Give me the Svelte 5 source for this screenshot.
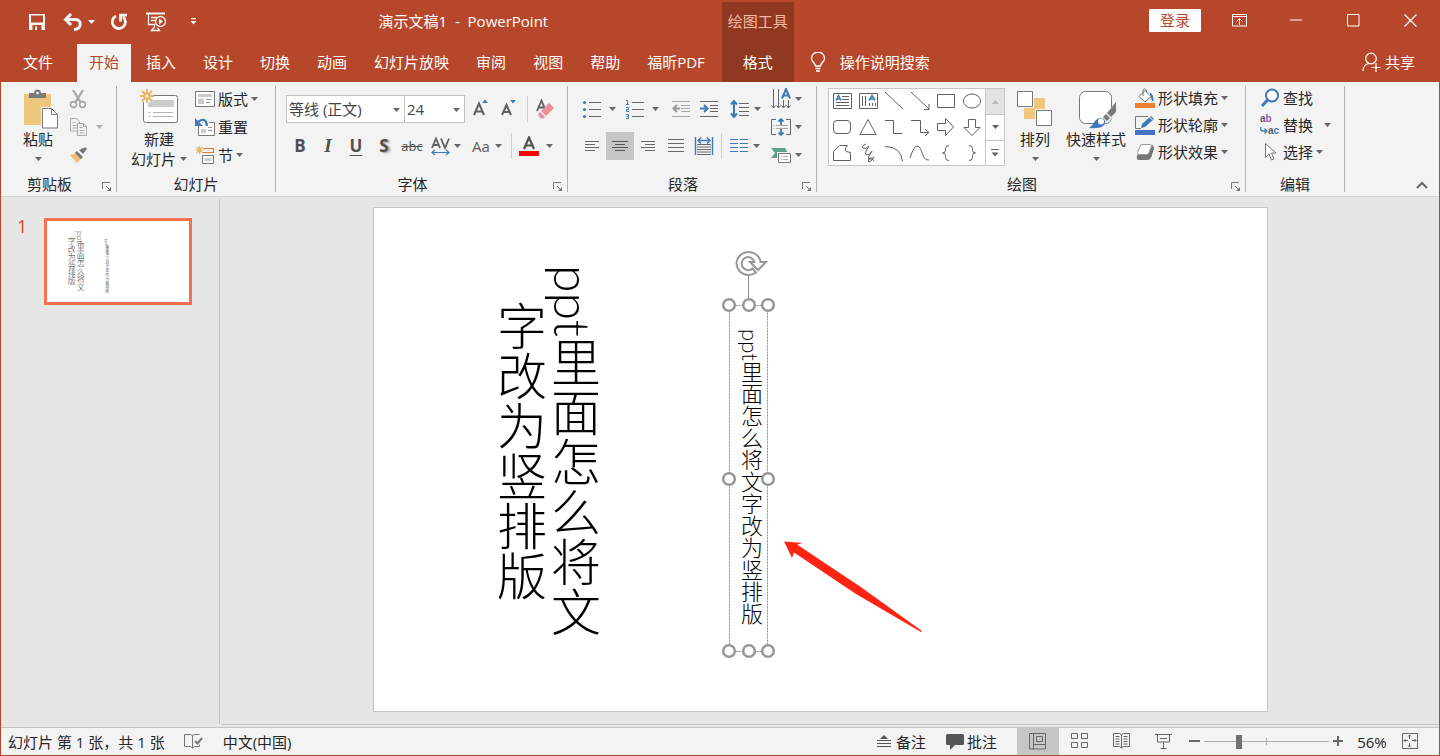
<script>
  let fontName = $state('等线 (正文)');
  let fontSize = $state('24');
  let zoom = $state(27);

  const tabs = ['插入', '设计', '切换', '动画', '幻灯片放映', '审阅', '视图', '帮助', '福昕PDF'];

  // Shapes gallery, drawn on a 26x26 cell
  const shapes = [
    { name: '文本框', d: 'M4.5 5.5h18v15h-18zM13 8.5h7M13 11.5h7M7 14.5h13M7 17.5h13', letter: 'M7 12.500l2.500-5 2.500 5M8 11h3' },
    { name: '竖排文本框', d: 'M4.5 5.5h18v15h-18zM7.500 8v10M10.500 8v10M14.500 15v3M17.500 15v3M20.500 15v3', letter: 'M14 12.500l3-5 3 5M15.500 11h3' },
    { name: '直线', d: 'M4 4l18 17' },
    { name: '箭头', d: 'M4 4l18 17M22 16v5.500h-5' },
    { name: '矩形', d: 'M4.500 6.500h17v13h-17z' },
    { name: '椭圆', d: 'M4.500 13a8.500 7 0 0 1 17 0a8.500 7 0 0 1-17 0z' },
    { name: '圆角矩形', d: 'M8 6.500h10q3.500 0 3.500 3.500v6q0 3.500-3.500 3.500h-10q-3.500 0-3.500-3.500v-6q0-3.500 3.500-3.500z' },
    { name: '三角形', d: 'M13 5.500l8 15h-16z' },
    { name: '肘形连接符', d: 'M4 6.500h8.500v13h9' },
    { name: '肘形箭头', d: 'M4 6.500h9.500v12h8M18 15l4 3.500-4 3.500' },
    { name: '右箭头', d: 'M4.500 9.500h8v-5l8 8.500-8 8.500v-5h-8z' },
    { name: '下箭头', d: 'M9.500 5.500h7v8h4.500l-8 8-8-8h4.500z' },
    { name: '任意多边形', d: 'M4.500 20.500v-9l6-6h8q-6 6 3 7v8z' },
    { name: '自由曲线', d: 'M11 4q-5 2-3 4t6-2q-6 9-2 9t5-4q-5 7-3 8t5-2q-3 5-5 5t0-3 5 2' },
    { name: '弧形', d: 'M4 6.500q16 0 17.500 15' },
    { name: '曲线', d: 'M3 18q4-12 7-12c6 0 4 15 12 14' },
    { name: '左大括号', d: 'M16 5.500q-3.500 0-3.500 3v2q0 2.500-3 2.500q3 0 3 2.500v2q0 3 3.500 3' },
    { name: '右大括号', d: 'M10 5.500q3.500 0 3.500 3v2q0 2.500 3 2.500q-3 0-3 2.500v2q0 3-3.500 3' }
  ];

  // Centres of the resize handles around the selected text box
  const handles = [
    [355, 97], [375, 97], [394, 97],
    [355, 271], [394, 271],
    [355, 443], [375, 443], [394, 443]
  ];
</script>

{#snippet caret()}
  <svg class="caret" width="7" height="4" viewBox="0 0 7 4" aria-hidden="true"><path d="M0 0h7L3.500 4z" fill="currentColor" /></svg>
{/snippet}

{#snippet footer(label, launcher)}
  <div class="group-footer">
    <span>{label}</span>
    {#if launcher}
      <button class="launcher" aria-label="{label}设置">
        <svg width="10" height="10" viewBox="0 0 10 10" fill="none" stroke="#777"><path d="M.5 7V.5H8M4 4l4 4" /><path d="M9 5v4H5z" fill="#777" stroke="none" /></svg>
      </button>
    {/if}
  </div>
{/snippet}

<div class="window">
  <header>
    <div class="title-row">
      <div class="quick">
        <button aria-label="保存">
          <svg width="18" height="18" viewBox="0 0 18 18"><path d="M1 1h16v16H1zM3 2.500v7h12v-7zM4.500 12v5h9v-5z" fill="#f5f5f5" fill-rule="evenodd" /><path d="M7 13.500h2V17H7z" fill="#f5f5f5" /></svg>
        </button>
        <button class="undo" aria-label="撤消">
          <svg width="22" height="18" viewBox="0 0 22 18" fill="none" stroke="#f5f5f5" stroke-width="3"><path d="M4 6.500h9.500c6.500 0 6.500 9.500-1.500 10" /><path d="M9 1L3.500 6.500 9 12" /></svg>
          {@render caret()}
        </button>
        <button aria-label="重复">
          <svg width="18" height="18" viewBox="0 0 18 18" fill="none" stroke="#f5f5f5" stroke-width="2.800"><path d="M6 3A6.600 6.600 0 1 0 13 3.800" /><path d="M10.500 8.500V2.200H17" /></svg>
        </button>
        <button aria-label="从头开始">
          <svg width="22" height="20" viewBox="0 0 22 20" fill="none" stroke="#f5f5f5"><path d="M1 1.500h19" stroke-width="2" /><path d="M3.500 2v10.500h7M6 5.500h6M6 8.500h4M9.500 13v2l-3 3.500h8l-2-2.500" stroke-width="1.300" /><circle cx="15.500" cy="9.500" r="5" stroke-width="1.300" /><path d="M14 6.500v6l4-3z" fill="#f5f5f5" stroke="none" /></svg>
        </button>
        <button aria-label="自定义快速访问工具栏">
          <svg width="7" height="8" viewBox="0 0 7 8" fill="#f5f5f5"><path d="M1 0h5v1.200H1zM0.500 3h6L3.500 6.500z" /></svg>
        </button>
      </div>
      <h1>演示文稿1&nbsp; -&nbsp; PowerPoint</h1>
    </div>

    <nav class="tabs" aria-label="功能区">
      <button class="tab file">文件</button>
      <button class="tab active">开始</button>
      {#each tabs as tab}
        <button class="tab">{tab}</button>
      {/each}
    </nav>

    <div class="context">
      <span class="context-name">绘图工具</span>
      <button class="context-tab">格式</button>
    </div>

    <div class="window-controls">
      <button class="login">登录</button>
      <button class="control" aria-label="功能区显示选项">
        <svg width="15" height="13" viewBox="0 0 15 13" fill="none" stroke="#fff"><path d="M.5 .5h14v11.500H.5zM.5 2.500h14M7.500 11V5M4.500 7.500l3-3 3 3" /></svg>
      </button>
      <button class="control" aria-label="最小化">
        <svg width="13" height="13" viewBox="0 0 13 13"><path d="M0 6h12" stroke="#fff" /></svg>
      </button>
      <button class="control" aria-label="最大化">
        <svg width="13" height="13" viewBox="0 0 13 13"><path d="M.5 .5h11.500v11.500H.5z" fill="none" stroke="#fff" /></svg>
      </button>
      <button class="control" aria-label="关闭">
        <svg width="13" height="13" viewBox="0 0 13 13"><path d="M.5 .5l12 12M12.500 .5l-12 12" fill="none" stroke="#fff" stroke-width="1.200" /></svg>
      </button>
    </div>

    <div class="tell-row">
      <button class="tell">
        <svg width="16" height="20" viewBox="0 0 16 20" fill="none" stroke="#fff" stroke-width="1.300"><path d="M5.500 14c0-3-4-4-4-7.500a6.300 6.300 0 0 1 13 0c0 3.500-4 4.500-4 7.500zM5.500 16.500h5M6 19h4" /></svg>
        操作说明搜索
      </button>
      <button class="share">
        <svg width="19" height="20" viewBox="0 0 19 20" fill="none" stroke="#fff" stroke-width="1.200"><circle cx="9" cy="6.500" r="5.300" /><path d="M1 19c0-4 2.500-7 6-7.500M14 11v9M9.500 15.500h9" /></svg>
        共享
      </button>
    </div>
  </header>

  <section class="ribbon">
    <div class="group clipboard">
      <div class="group-body">
        <button class="big">
          <svg width="40" height="40" viewBox="0 0 40 40"><path d="M6 5h27v31H6z" fill="#edc77d" /><path d="M11 4h5a3.500 3.500 0 0 1 7 0h5v5H11z" fill="#7a7a7a" /><circle cx="19.500" cy="4" r="1.300" fill="#fff" /><path d="M24.500 19.500h9l6 6v13.500h-15z" fill="#fff" stroke="#f3f3f3" stroke-width="3" /><path d="M24.500 19.500h9l6 6v13.500h-15zM33.500 19.500v6h6" fill="#fff" stroke="#777" /></svg>
          <span>粘贴</span>
          <span>{@render caret()}</span>
        </button>
        <div class="stack loose">
          <button class="small faded" aria-label="剪切">
            <svg width="20" height="20" viewBox="0 0 20 20" fill="none" stroke="#a5a5a5" stroke-width="1.600"><path d="M5 1l7.500 12M15 1L7.500 13" stroke-width="2.200" /><circle cx="5.500" cy="15.500" r="2.900" /><circle cx="14.500" cy="15.500" r="2.900" /></svg>
          </button>
          <button class="small faded" aria-label="复制">
            <svg width="20" height="20" viewBox="0 0 20 20" fill="#f3f3f3" stroke="#aaa"><path d="M2.500 1.500h6l3 3v9.500h-9zM4.500 5.500h3M4.500 8.500h5M4.500 11h5" /><path d="M9.500 6.500h6l3 3v9h-9zM15.500 6.500v3h3M11.500 10.500h3M11.500 13.500h5M11.500 16h5" /></svg>
            <span class="copy-caret">{@render caret()}</span>
          </button>
          <button class="small" aria-label="格式刷">
            <svg width="20" height="20" viewBox="0 0 20 20"><path d="M2 10l7-2 5 5-5 5z" fill="#edc077" /><path d="M9 6l6 6-2 2-6-6zM11 5l4 4 3.500-4.500q1-2.500-2-2z" fill="#777" /></svg>
          </button>
        </div>
      </div>
      {@render footer('剪贴板', true)}
    </div>

    <div class="group slides">
      <div class="group-body">
        <button class="big wide">
          <svg width="42" height="40" viewBox="0 0 42 40"><rect x="5.500" y="6.500" width="34" height="27" rx="2" fill="#fff" stroke="#777" /><path d="M10 11h26v7H10z" fill="#ccc" /><path d="M15 23.500h20M15 27.500h20M10.500 23.500h2M10.500 27.500h2" stroke="#b5b5b5" /><circle cx="9" cy="7" r="7" fill="#f3f3f3" /><g stroke="#e8b55f" stroke-width="1.800" fill="none"><circle cx="9" cy="7" r="2.500" /><path d="M9 0v4M9 10v4M2 7h4M12 7h4M4 2l3 3M11 9l3 3M14 2l-3 3M7 9l-3 3" /></g></svg>
          <span>新建</span>
          <span>幻灯片{@render caret()}</span>
        </button>
        <div class="stack loose">
          <button class="small">
            <svg width="20" height="20" viewBox="0 0 20 20" fill="none" stroke="#777"><path d="M.5 2.500h19v15H.5z" fill="#fff" /><path d="M3 5h14v3H3zM3 9.500h6V15H3z" fill="#ccc" stroke="none" /><path d="M11 10.500h6M11 13.500h4" stroke="#999" /></svg>
            版式{@render caret()}
          </button>
          <button class="small">
            <svg width="20" height="20" viewBox="0 0 20 20" fill="none"><path d="M3.500 5.500h16v13h-16z" fill="#fff" stroke="#777" /><path d="M6 12h5v4H6z" fill="#ccc" /><path d="M13 10.500h4M13 13.500h4" stroke="#999" /><path d="M2 6q9-7 10 3" stroke="#f3f3f3" stroke-width="5" /><path d="M3 5q8-6 9 4" stroke="#3f7ab8" stroke-width="2.200" /><path d="M0 1v8h8z" fill="#3f7ab8" /></svg>
            重置
          </button>
          <button class="small">
            <svg width="20" height="20" viewBox="0 0 20 20" fill="none"><path d="M8 3.500h10.500v4H8" stroke="#e07a28" stroke-width="1.200" /><path d="M7.500 10.500h11v8h-11z" fill="#fff" stroke="#777" /><path d="M9.500 13h7v3h-7z" fill="#ccc" /><path d="M4.500 1v8M.5 5h8M1.500 2l6 6M7.500 2l-6 6" stroke="#e8b55f" stroke-width="1.200" /></svg>
            节{@render caret()}
          </button>
        </div>
      </div>
      {@render footer('幻灯片', false)}
    </div>

    <div class="group font">
      <div class="group-body rows">
        <div class="row">
          <div class="combos">
            <div class="combo name">
              <select bind:value={fontName} aria-label="字体">
                <option>等线 (正文)</option>
                <option>等线 Light (标题)</option>
              </select>
              {@render caret()}
            </div>
            <div class="combo size">
              <select bind:value={fontSize} aria-label="字号">
                <option>18</option>
                <option>24</option>
                <option>60</option>
              </select>
              {@render caret()}
            </div>
          </div>
          <div class="cluster">
            <button class="tool" aria-label="增大字号">
              <svg width="18" height="20" viewBox="0 0 18 20" fill="none"><path d="M1 16L6 4.500 11 16M3 12.500h6" stroke="#606060" stroke-width="2" /><path d="M9 4h6l-3-3.500z" fill="#3f7ab8" /></svg>
            </button>
            <button class="tool" aria-label="减小字号">
              <svg width="18" height="20" viewBox="0 0 18 20" fill="none"><path d="M1 16L5.500 6 10 16M2.500 13h6" stroke="#606060" stroke-width="2" /><path d="M9 1h6l-3 3.500z" fill="#3f7ab8" /></svg>
            </button>
          </div>
          <i class="sep"></i>
          <button class="tool" aria-label="清除所有格式">
            <svg width="20" height="20" viewBox="0 0 20 20" fill="none"><path d="M2 12L6.500 1.500 10 10M4 8.500h5" stroke="#606060" stroke-width="1.800" /><path d="M14 4l5 5-8 8-5-5z" fill="#e8909c" /><path d="M5 13l5 5-1.500 1.500H6L3.500 17v-2.500z" fill="#e8909c" /></svg>
          </button>
        </div>
        <div class="row">
          <div class="cluster">
            <button class="tool letter bold">B</button>
            <button class="tool letter italic">I</button>
            <button class="tool letter underline">U</button>
            <button class="tool letter shadow">S</button>
            <button class="tool letter strike">abc</button>
            <button class="tool drop tight" aria-label="字符间距">
              <svg width="28" height="20" viewBox="0 0 28 20" fill="none"><path d="M6 12L10 2.500 14 12M7.500 9h5M15 2.500L19 12l4-9.500" stroke="#606060" stroke-width="1.800" /><path d="M6 16.500h17M9 14L6 16.500 9 19M20 14l3 2.500-3 2.500" stroke="#3f7ab8" stroke-width="1.200" /></svg>
              {@render caret()}
            </button>
            <button class="tool drop tight"><span class="case">Aa</span>{@render caret()}</button>
          </div>
          <i class="sep"></i>
          <button class="tool drop" aria-label="字体颜色">
            <svg width="28" height="20" viewBox="0 0 28 20" fill="none"><path d="M9 13L14 1.500 19 13M11 9.500h6" stroke="#505050" stroke-width="2.200" /><path d="M4 15h20v5H4z" fill="#f00" /></svg>
            {@render caret()}
          </button>
        </div>
      </div>
      {@render footer('字体', true)}
    </div>

    <div class="group paragraph">
      <div class="group-body">
        <div class="rows">
          <div class="row">
            <div class="cluster">
              <button class="tool drop" aria-label="项目符号">
                <svg width="28" height="20" viewBox="0 0 28 20"><path d="M11 3.500h12M11 10.500h12M11 17.500h12" stroke="#666" /><g fill="#3f7ab8"><circle cx="6.500" cy="3.500" r="1.600" /><circle cx="6.500" cy="10.500" r="1.600" /><circle cx="6.500" cy="17.500" r="1.600" /></g></svg>
                {@render caret()}
              </button>
              <button class="tool drop" aria-label="编号">
                <svg width="28" height="20" viewBox="0 0 28 20" fill="none"><path d="M11 3.500h12M11 10.500h12M11 17.500h12" stroke="#666" /><path d="M5 1.500h1.500v4M5 5.500h3M5 8.500h2.500v2H5.500v2H8M5 15.500h2.500v4H5M5.500 17.500h2" stroke="#3f7ab8" /></svg>
                {@render caret()}
              </button>
            </div>
            <div class="cluster">
              <button class="tool" aria-label="减少缩进量">
                <svg width="20" height="18" viewBox="0 0 20 18" fill="none"><path d="M1 1.500h18M10 5.500h9M10 8.500h9M10 11.500h9M1 16.500h18" stroke="#aaa" /><path d="M9 8.500H3M6 5L2.500 8.500 6 12" stroke="#999" stroke-width="2" /></svg>
              </button>
              <button class="tool" aria-label="增加缩进量">
                <svg width="20" height="18" viewBox="0 0 20 18" fill="none"><path d="M1 1.500h18M11 5.500h8M11 8.500h8M11 11.500h8M1 16.500h18" stroke="#666" /><path d="M1 8.500h7M5 5l3.500 3.500L5 12" stroke="#3f7ab8" stroke-width="2" /></svg>
              </button>
            </div>
            <button class="tool drop tight" aria-label="行距">
              <svg width="28" height="20" viewBox="0 0 28 20" fill="none"><path d="M13 4.500h10M13 8.500h10M13 12.500h10M13 16.500h10" stroke="#666" /><path d="M8 2.500v15M5 5.500L8 2l3 3.500M5 14.500L8 18l3-3.500" stroke="#3f7ab8" stroke-width="2" /></svg>
              {@render caret()}
            </button>
          </div>
          <div class="row">
            <div class="cluster">
              <button class="tool" aria-label="左对齐"><svg width="16" height="12" viewBox="0 0 16 12"><path d="M1 1.500h14M1 4.500h10M1 7.500h14M1 10.500h10" stroke="#666" /></svg></button>
              <button class="tool pressed" aria-label="居中"><svg width="16" height="12" viewBox="0 0 16 12"><path d="M0 1.500h16M3 4.500h10M0 7.500h16M3 10.500h10" stroke="#555" /></svg></button>
              <button class="tool" aria-label="右对齐"><svg width="16" height="12" viewBox="0 0 16 12"><path d="M1 1.500h14M5 4.500h10M1 7.500h14M5 10.500h10" stroke="#666" /></svg></button>
              <button class="tool" aria-label="两端对齐"><svg width="16" height="14" viewBox="0 0 16 14"><path d="M0 .5h16M0 4.500h16M0 8.500h16M0 12.500h16" stroke="#666" /></svg></button>
              <button class="tool" aria-label="分散对齐">
                <svg width="20" height="20" viewBox="0 0 20 20" fill="none"><path d="M1.500 1v18M18.500 1v18M4 4.500h12M7 1.500L4 4.500l3 3M13 1.500l3 3-3 3" stroke="#3f7ab8" stroke-width="1.400" /><path d="M3 8.500h14M3 11h14M3 13.500h14M3 16h14M3 18.500h14" stroke="#666" /></svg>
              </button>
            </div>
            <i class="sep"></i>
            <button class="tool drop tight" aria-label="分栏">
              <svg width="28" height="20" viewBox="0 0 28 20"><path d="M5 3.500h8M5 7.500h8M5 11.500h8M5 15.500h8M15 3.500h8M15 7.500h8M15 11.500h8M15 15.500h8" stroke="#3f7ab8" /></svg>
              {@render caret()}
            </button>
          </div>
        </div>
        <div class="stack loose">
          <button class="small tight" aria-label="文字方向">
            <svg width="28" height="22" viewBox="0 0 28 22" fill="none"><path d="M6.500 1v19M11.500 1v19M16.500 12v8M21.500 12v8M4.500 17.500l2 2.500 2-2.500M9.500 17.500l2 2.500 2-2.500M14.500 17.500l2 2.500 2-2.500M19.500 17.500l2 2.500 2-2.500" stroke="#666" /><path d="M15 10.500l4-9.500 4 9.500M16.500 7.500h5" stroke="#3f7ab8" stroke-width="2" /></svg>
            {@render caret()}
          </button>
          <button class="small tight" aria-label="对齐文本">
            <svg width="28" height="20" viewBox="0 0 28 20" fill="none"><path d="M9 2.500H4.500v15H9M19 2.500h4.500v15H19" stroke="#666" /><path d="M9 8.500h12M9 11.500h12M6.500 8.500h1M6.500 11.500h1" stroke="#aaa" /><path d="M14 8V2M11.500 4.500L14 2l2.500 2.500M14 12v6M11.500 15.500L14 18l2.500-2.500" stroke="#3f7ab8" stroke-width="1.800" /></svg>
            {@render caret()}
          </button>
          <button class="small tight" aria-label="转换为 SmartArt">
            <svg width="28" height="20" viewBox="0 0 28 20" fill="none"><path d="M4 3h14l3 5-3 5H4l4-5z" fill="#5ba28c" /><path d="M11.500 8.500h12v9h-12z" fill="#fff" stroke="#f3f3f3" stroke-width="3" /><path d="M11.500 8.500h12v9h-12z" fill="#fff" stroke="#777" /><path d="M14 11.500h1M14 14.500h1M16 11.500h5M16 14.500h5" stroke="#aaa" /></svg>
            {@render caret()}
          </button>
        </div>
      </div>
      {@render footer('段落', true)}
    </div>

    <div class="group drawing">
      <div class="group-body">
        <div class="gallery">
          <div class="shapes">
            {#each shapes as shape}
              <button aria-label={shape.name}>
                <svg width="26" height="26" viewBox="0 0 26 26" fill="none" stroke="#606060">
                  <path d={shape.d} />
                  {#if shape.letter}
                    <path d={shape.letter} stroke="#3f7ab8" stroke-width="1.500" />
                  {/if}
                </svg>
              </button>
            {/each}
          </div>
          <div class="gallery-scroll">
            <button disabled aria-label="上一行"><svg width="7" height="4" viewBox="0 0 7 4"><path d="M0 4h7L3.500 0z" fill="#b5b5b5" /></svg></button>
            <button aria-label="下一行">{@render caret()}</button>
            <button aria-label="其他"><svg width="8" height="8" viewBox="0 0 8 8" fill="#666"><path d="M0 0h8v1H0zM.5 3.500h7L4 7.500z" /></svg></button>
          </div>
        </div>
        <button class="big">
          <svg width="40" height="40" viewBox="0 0 40 40"><path d="M19 9h11v11H19zM9 19h11v11H9z" fill="#edc77d" /><path d="M2.500 2.500h15v15h-15zM21.500 21.500h15v15h-15z" fill="#fff" stroke="#f3f3f3" stroke-width="3" /><path d="M2.500 2.500h15v15h-15zM21.500 21.500h15v15h-15z" fill="#fff" stroke="#777" /></svg>
          <span>排列</span>
          <span>{@render caret()}</span>
        </button>
        <button class="big wide">
          <svg width="40" height="40" viewBox="0 0 40 40"><rect x="3.500" y="2.500" width="32" height="32" rx="6" fill="#fff" stroke="#777" /><path d="M41 12v12L31 34l-5-4z" fill="#f3f3f3" /><path d="M40 13v10l-5 5-4-4zM30 25l4 4-3 3-4-4z" fill="#7a7a7a" /><path d="M13 39q4-3 6-7 4-5 9-2 3 4-1 7-4 3-14 2z" fill="#3f7ab8" /><circle cx="25" cy="32.500" r="3" fill="#fff" /></svg>
          <span>快速样式</span>
          <span>{@render caret()}</span>
        </button>
        <div class="stack">
          <button class="small">
            <svg width="20" height="20" viewBox="0 0 20 20" fill="none"><path d="M0 15h20v5H0z" fill="#ed7d31" /><path d="M10 2.500l6 6-6 5.500-6-5.500z" fill="#fff" stroke="#777" /><path d="M8 8V2q1.500-2.500 3.500 0v2" stroke="#777" /><path d="M14.500 4.500q4.500 1 4 9.500-2-1-2.500-5z" fill="#3f7ab8" /></svg>
            形状填充{@render caret()}
          </button>
          <button class="small">
            <svg width="20" height="20" viewBox="0 0 20 20" fill="none"><path d="M0 15h20v5H0z" fill="#4472c4" /><path d="M13 1.500H.5v12H6" stroke="#777" /><path d="M6 13l1-4 9-8 3 3-9 8z" fill="#3f7ab8" /><path d="M14.500 2l3 3" stroke="#fff" /></svg>
            形状轮廓{@render caret()}
          </button>
          <button class="small">
            <svg width="20" height="20" viewBox="0 0 20 20"><path d="M2 14l5-11h9q3 0 3 4l-3 9q-1 2-4 2H4q-3 0-2-4z" fill="#777" /><path d="M7 2.500h8q2 0 1.500 2l-2.500 6q-.5 2-2.500 2h-7q-2.500 0-2-2l2.500-6q.5-2 2-2z" fill="#fff" stroke="#999" /></svg>
            形状效果{@render caret()}
          </button>
        </div>
      </div>
      {@render footer('绘图', true)}
    </div>

    <div class="group editing">
      <div class="group-body">
        <div class="stack">
          <button class="small">
            <svg width="20" height="20" viewBox="0 0 20 20" fill="none" stroke="#3f7ab8"><circle cx="12" cy="7.500" r="6" fill="#fff" stroke-width="2" /><path d="M8 11.500l-6 6.500" stroke-width="3" /></svg>
            查找
          </button>
          <button class="small replace">
            <span class="swap" aria-hidden="true">
              <span>a<b>b</b></span>
              <span><svg width="8" height="8" viewBox="0 0 8 8" fill="none" stroke="#3f7ab8" stroke-width="1.300"><path d="M.8 0v2q0 2 2 2H7M4.500 1.500L7 4 4.500 6.500" /></svg>a<em>c</em></span>
            </span>
            替换{@render caret()}
          </button>
          <button class="small">
            <svg width="20" height="20" viewBox="0 0 20 20"><path d="M5.500 1.500v14l3.500-3.500 2.500 6 2.500-1-2.500-6h4.500z" fill="#fff" stroke="#777" /></svg>
            选择{@render caret()}
          </button>
        </div>
      </div>
      {@render footer('编辑', false)}
    </div>

    <button class="collapse" aria-label="折叠功能区">
      <svg width="12" height="8" viewBox="0 0 12 8"><path d="M1 7l5-5 5 5" fill="none" stroke="#666" stroke-width="2" /></svg>
    </button>
  </section>

  <main>
    <aside>
      <span class="slide-number">1</span>
      <button class="thumb" aria-label="幻灯片 1">
        <span class="thumb-title">ppt里面怎么将文<br />字改为竖排版</span>
        <span class="thumb-text">ppt里面怎么将文字改为竖排版</span>
      </button>
    </aside>

    <div class="stage">
      <div class="slide">
        <p class="slide-title">ppt里面怎么将文<br />字改为竖排版</p>
        <p class="slide-text">ppt里面怎么将文字改为竖排版</p>
        <svg class="overlay" viewBox="0 0 893 503" fill="none" aria-hidden="true">
          <path d="M355.500 97.500h38v346h-38z" stroke="#8c8c8c" stroke-dasharray="2 1" />
          <path d="M374.500 68v22" stroke="#8c8c8c" />
          <path d="M386.500 54A12 11.500 0 1 0 382 64.500L378.500 60.500A6.500 6.500 0 1 1 380.500 54H376L384 62 392 54Z" fill="#fff" stroke="#979797" stroke-width="2" />
          {#each handles as [x, y]}
            <circle cx={x} cy={y} r="5.800" fill="#fff" stroke="#979797" stroke-width="2.500" />
          {/each}
          <path d="M410 333.500l19 1.500-6 1.500 63 42 62 44.500-1 1-65-38-62-41.500-2 5.500z" fill="#ff2412" />
        </svg>
      </div>
    </div>
  </main>

  <footer class="status">
    <span>幻灯片 第 1 张，共 1 张</span>
    <button class="proof" aria-label="拼写检查">
      <svg width="19" height="17" viewBox="0 0 19 17" fill="none" stroke="#777"><path d="M8.500 2.500l-2-1H.5v12h6l2 1.500 2-1.500h5v-2M8.500 2.500V15M8.500 2.500l2-1h5" /><path d="M11 8l2.500 2.500L18 5" stroke-width="2" /></svg>
    </button>
    <button>中文(中国)</button>
    <div class="status-right">
      <button class="note">
        <svg width="14" height="15" viewBox="0 0 14 15"><path d="M3 5h8L7 1z" fill="#555" /><path d="M0 6.500h14M0 9.500h14M0 12.500h14" stroke="#555" /></svg>
        备注
      </button>
      <button class="comment">
        <svg width="18" height="17" viewBox="0 0 18 17"><path d="M1.500 1h15q1.500 0 1.500 1.500v8q0 1.500-1.500 1.500H9l-5 5v-5H1.500Q0 12 0 10.500v-8Q0 1 1.500 1z" fill="#555" /></svg>
        批注
      </button>
      <div class="views">
        <button class="pressed" aria-label="普通视图"><svg width="18" height="17" viewBox="0 0 18 17" fill="none" stroke="#666"><path d="M.5 .5h16v15.500H.5zM4.500 .5v15.500M4.500 11.500h12M7.500 3.500h6v5h-6z" /></svg></button>
        <button aria-label="幻灯片浏览"><svg width="18" height="17" viewBox="0 0 18 17" fill="none" stroke="#666"><path d="M.5 .5h6v5h-6zM10.500 .5h6v5h-6zM.5 9.500h6v5h-6zM10.500 9.500h6v5h-6z" /></svg></button>
        <button aria-label="阅读视图"><svg width="18" height="17" viewBox="0 0 18 17" fill="none" stroke="#666"><path d="M8.500 2L6.500 .5h-6v13h6l2 1.500 2-1.500h6V.5h-6zM8.500 2v13M2.500 3.500h4M2.500 6h4M2.500 8.500h4M2.500 11h4M10.500 3.500h4M10.500 6h4M10.500 8.500h4M10.500 11h4" /></svg></button>
        <button aria-label="幻灯片放映"><svg width="18" height="17" viewBox="0 0 18 17" fill="none" stroke="#666"><path d="M0 1.500h17M2.500 1.500v7.500h12V1.500M5 5.500h7M8.500 9v6M5.500 15.500h6" /></svg></button>
      </div>
      <button class="step" aria-label="缩小"><svg width="11" height="11" viewBox="0 0 11 11"><path d="M0 5h11" stroke="#666" stroke-width="2" /></svg></button>
      <input type="range" min="0" max="100" bind:value={zoom} aria-label="缩放" />
      <button class="step" aria-label="放大"><svg width="11" height="11" viewBox="0 0 11 11"><path d="M0 5h10M5 0v10" stroke="#666" stroke-width="2" /></svg></button>
      <button class="percent">56%</button>
      <button class="fit" aria-label="适应窗口"><svg width="16" height="17" viewBox="0 0 16 17" fill="none" stroke="#666"><path d="M.5 .5h15v15H.5zM7.500 2v4M7.500 10v4M2 7.500h4M10 7.500h4" /><path d="M6 3.500l1.500-1.500L9 3.500M6 12.500L7.500 14 9 12.500M3.500 6L2 7.500 3.500 9M12.500 6L14 7.500 12.500 9" /></svg></button>
    </div>
  </footer>
</div>

<style>
  :global(body) {
    margin: 0;
  }

  .window {
    display: flex;
    flex-direction: column;
    min-height: 100vh;
    box-sizing: border-box;
    border: 1px solid #b7472a;
    border-top: 0;
    background: #e6e6e6;
    color: #262626;
    font-family: 'Open Sans', 'Noto Sans CJK SC', sans-serif;
    font-size: 15px;
    line-height: 20px;
  }

  button {
    display: flex;
    align-items: center;
    justify-content: center;
    padding: 0;
    border: 0;
    background: none;
    color: inherit;
    font: inherit;
    white-space: nowrap;
  }

  svg {
    flex: none;
    display: block;
  }

  .caret {
    color: #666;
  }

  /* Title bar and tabs */
  header {
    display: grid;
    grid-template-columns: auto auto 1fr;
    grid-template-rows: 44px 38px;
    background: #b7472a;
    color: #fff;
  }

  .title-row {
    display: flex;
    align-items: center;
    padding-left: 24px;
  }

  .quick {
    display: flex;
    gap: 13px;
  }

  .quick button {
    width: 24px;
    height: 24px;
  }

  .quick .undo {
    width: 32px;
    gap: 4px;
  }

  .quick .caret {
    color: #f5f5f5;
  }

  h1 {
    flex: 1;
    margin: 0;
    padding-bottom: 2px;
    font-size: 15px;
    font-weight: 400;
    text-align: center;
    white-space: nowrap;
  }

  .tabs {
    grid-row: 2;
    display: flex;
    gap: 3px;
    padding-right: 5px;
  }

  .tab {
    padding: 0 12px 2px;
  }

  .tab.file {
    padding: 0 21px 2px 22px;
  }

  .tab.active {
    background: #f3f3f3;
    color: #b7472a;
  }

  .context {
    grid-row: 1 / 3;
    grid-column: 2;
    display: flex;
    flex-direction: column;
    width: 72px;
    margin-top: 2px;
    background: #903820;
  }

  .context-name {
    height: 42px;
    line-height: 38px;
    text-align: center;
    color: #f5b9a5;
  }

  .context-tab {
    flex: 1;
    padding-bottom: 2px;
  }

  .window-controls {
    grid-column: 3;
    display: flex;
    align-items: center;
    justify-content: flex-end;
    height: 40px;
  }

  .login {
    width: 52px;
    height: 23px;
    margin-right: 10px;
    border-radius: 1px;
    background: #fff;
    color: #b7472a;
  }

  .control {
    width: 57px;
    height: 40px;
  }

  .tell-row {
    grid-column: 3;
    display: flex;
    align-items: center;
    justify-content: space-between;
    padding: 0 24px 2px 16px;
  }

  .tell {
    gap: 14px;
  }

  .share {
    gap: 4px;
  }

  /* Ribbon */
  .ribbon {
    display: flex;
    height: 114px;
    border-bottom: 1px solid #d2d2d2;
    background: #f3f3f3;
  }

  .group {
    display: flex;
    flex: none;
    flex-direction: column;
    box-sizing: border-box;
    margin: 4px 0;
    border-right: 1px solid #b4b4b4;
  }

  .clipboard { width: 116px; }
  .slides { width: 159px; }
  .font { width: 292px; }
  .paragraph { width: 249px; }
  .drawing { width: 429px; }
  .editing { width: 99px; }

  .group-body {
    display: flex;
    flex: 1;
    align-items: flex-start;
    padding-left: 10px;
  }

  .clipboard .group-body {
    gap: 8px;
    padding-left: 15px;
  }

  .slides .group-body {
    gap: 4px;
  }

  .drawing .group-body {
    gap: 7px;
  }

  .editing .group-body {
    padding-left: 14px;
  }

  .group-footer {
    display: flex;
    align-items: center;
    height: 16px;
  }

  .group-footer span {
    flex: 1;
    text-align: center;
  }

  .launcher {
    width: 18px;
    height: 16px;
    padding-top: 6px;
  }

  .big {
    flex-direction: column;
    width: 44px;
    padding-top: 3px;
  }

  .big.wide {
    width: 64px;
  }

  .big span {
    display: flex;
    align-items: center;
    justify-content: center;
    gap: 4px;
    height: 20px;
  }

  .stack {
    display: flex;
    flex-direction: column;
    gap: 1px;
  }

  .small {
    justify-content: flex-start;
    gap: 3px;
    height: 26px;
    padding-bottom: 2px;
  }

  .stack.loose {
    gap: 2px;
  }

  .loose .small {
    padding-bottom: 0;
  }

  .small.tight {
    gap: 0;
  }

  .faded .caret {
    color: #b0b0b0;
  }

  .copy-caret {
    padding-left: 5px;
  }

  .rows {
    display: flex;
    flex-direction: column;
    gap: 9px;
    padding-top: 9px;
  }

  .row {
    display: flex;
    align-items: center;
    gap: 3px;
    height: 28px;
  }

  .cluster {
    display: flex;
    align-items: center;
  }

  .combos {
    display: flex;
  }

  .combo {
    position: relative;
    box-sizing: border-box;
    height: 28px;
    border: 1px solid #c3c3c3;
    background: #fff;
  }

  .combo.name {
    width: 119px;
  }

  .combo.size {
    width: 60px;
    border-left: 0;
  }

  .combo select {
    width: 100%;
    height: 100%;
    padding: 0 2px;
    border: 0;
    background: none;
    appearance: none;
    color: #444;
    font: inherit;
  }

  .combo .caret {
    position: absolute;
    top: 12px;
    right: 4px;
    pointer-events: none;
  }

  .tool {
    width: 28px;
    height: 28px;
  }

  .tool.drop {
    justify-content: flex-start;
    gap: 3px;
    width: 43px;
  }

  .tool.drop.tight {
    gap: 0;
    width: 41px;
  }

  .pressed {
    background: #c6c6c6;
  }

  .sep {
    width: 1px;
    height: 26px;
    background: #d0d0d0;
  }

  .letter {
    color: #505050;
    font-size: 17px;
    font-weight: 700;
  }

  .italic {
    font-family: 'Liberation Serif', serif;
    font-size: 19px;
    font-style: italic;
  }

  .underline {
    text-decoration: underline;
    text-underline-offset: 3px;
  }

  .shadow {
    text-shadow: 2px 1px 2px #999;
  }

  .strike {
    font-size: 13px;
    font-weight: 400;
    text-decoration: line-through;
  }

  .case {
    width: 28px;
    color: #606060;
  }

  .gallery {
    display: flex;
    box-sizing: border-box;
    height: 78px;
    margin: 2px 1px 0;
    border: 1px solid #c6c6c6;
    background: #fff;
  }

  .shapes {
    display: grid;
    grid-template-columns: repeat(6, 26px);
    grid-template-rows: repeat(3, 26px);
    align-content: center;
  }

  .gallery-scroll {
    display: grid;
    grid-template-rows: repeat(3, 1fr);
    width: 18px;
    border-left: 1px solid #c6c6c6;
  }

  .gallery-scroll button + button {
    border-top: 1px solid #c6c6c6;
  }

  .gallery-scroll button:disabled {
    background: #e3e3e3;
  }

  .replace .caret {
    margin-left: 8px;
  }

  .swap {
    display: flex;
    flex-direction: column;
    width: 20px;
    color: #606060;
    font-family: 'Liberation Sans', sans-serif;
    font-size: 10px;
    font-weight: 700;
    line-height: 12px;
  }

  .swap span {
    display: flex;
    align-items: center;
  }

  .swap b {
    color: #9b59b6;
  }

  .swap em {
    color: #3f7ab8;
    font-style: normal;
  }

  .collapse {
    align-self: flex-end;
    width: 34px;
    height: 22px;
    margin-left: auto;
  }

  /* Thumbnails and slide */
  main {
    display: flex;
    flex: 1;
  }

  aside {
    display: flex;
    flex: none;
    align-items: flex-start;
    gap: 17px;
    box-sizing: border-box;
    width: 219px;
    margin: 2px 0 3px;
    padding: 19px 27px 0 16px;
    border-right: 1px solid #c3c3c3;
  }

  .slide-number {
    color: #d04a2b;
    font-size: 18px;
    line-height: 16px;
  }

  .thumb {
    position: relative;
    flex: 1;
    height: 87px;
    border: 3px solid #f4724f;
    background: #fff;
    color: #333;
    font-weight: 300;
  }

  .thumb-title {
    position: absolute;
    top: 10px;
    left: 20px;
    writing-mode: vertical-rl;
    font-size: 8px;
    line-height: 9px;
    text-align: center;
  }

  .thumb-text {
    position: absolute;
    top: 18px;
    left: 56px;
    writing-mode: vertical-rl;
    font-size: 4px;
    line-height: 6px;
  }

  .stage {
    display: flex;
    flex: 1;
    align-items: flex-start;
    justify-content: center;
    box-sizing: border-box;
    margin: 0 0 2px 2px;
    padding: 10px 20px 12px 0;
    border-bottom: 1px solid #c3c3c3;
  }

  .slide {
    position: relative;
    box-sizing: border-box;
    width: 100%;
    max-width: 895px;
    aspect-ratio: 895 / 505;
    border: 1px solid #c6c6c6;
    background: #fff;
    color: #000;
    font-family: Lato, 'Noto Sans CJK SC', sans-serif;
    font-weight: 300;
  }

  .slide p {
    position: absolute;
    margin: 0;
    writing-mode: vertical-rl;
    white-space: nowrap;
  }

  .slide .slide-title {
    top: 57px;
    left: 118px;
    font-size: 50px;
    line-height: 54px;
    text-align: center;
  }

  .slide .slide-text {
    top: 121px;
    left: 363px;
    font-size: 22px;
    line-height: 26px;
  }

  .overlay {
    position: absolute;
    inset: 0;
    width: 100%;
    height: 100%;
  }

  /* Status bar */
  .status {
    display: flex;
    align-items: center;
    height: 27px;
    padding-left: 7px;
    border-top: 1px solid #c3c3c3;
    background: #f3f3f3;
  }

  .proof {
    width: 58px;
  }

  .status-right {
    display: flex;
    align-items: center;
    height: 100%;
    margin-left: auto;
    padding-right: 15px;
  }

  .note {
    gap: 5px;
    margin-right: 20px;
  }

  .comment {
    gap: 3px;
    margin-right: 20px;
  }

  .views {
    display: flex;
    height: 100%;
  }

  .views button {
    width: 42px;
  }

  .step {
    width: 19px;
    height: 20px;
  }

  input[type='range'] {
    width: 125px;
    height: 17px;
    margin: 0;
    appearance: none;
    background:
      linear-gradient(#b0b0b0, #b0b0b0) center / 100% 1px no-repeat,
      linear-gradient(#b0b0b0, #b0b0b0) center / 1px 7px no-repeat;
  }

  input[type='range']::-webkit-slider-thumb {
    width: 6px;
    height: 14px;
    appearance: none;
    background: #707070;
  }

  .percent {
    width: 48px;
  }

  .fit {
    width: 28px;
  }
</style>
